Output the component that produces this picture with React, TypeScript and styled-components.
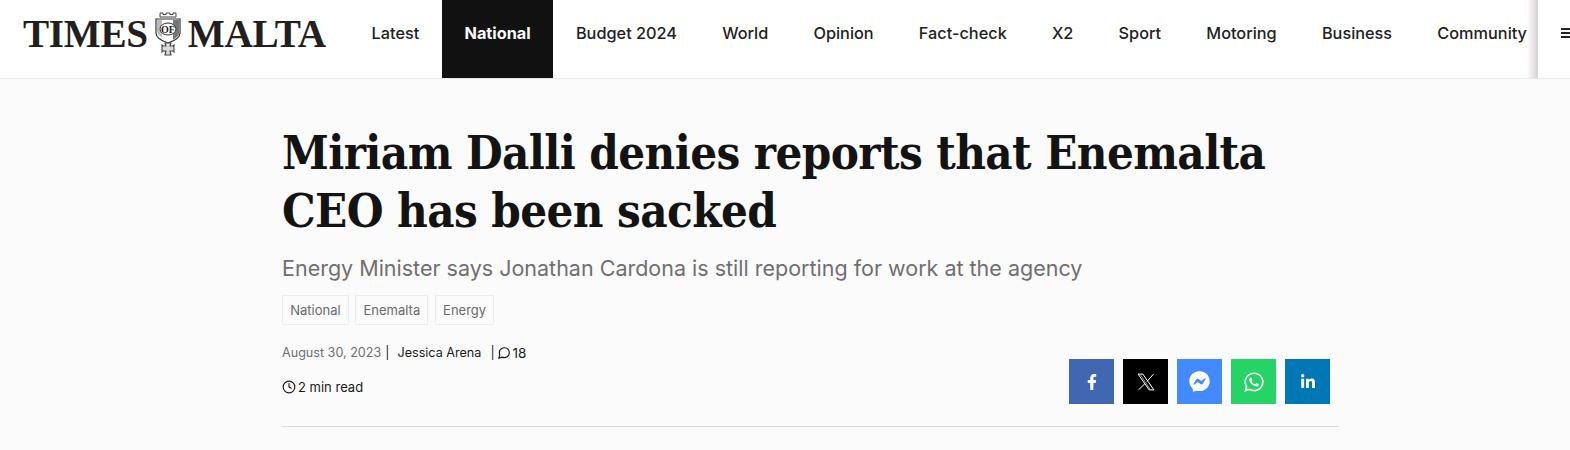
import React from 'react';
import styled, { createGlobalStyle } from 'styled-components';
import { FaFacebookF, FaFacebookMessenger, FaWhatsapp, FaLinkedinIn } from 'react-icons/fa';
import { FiClock, FiMessageCircle } from 'react-icons/fi';

const GlobalStyle = createGlobalStyle`
  html, body {
    margin: 0;
    padding: 0;
    background: #fbfbfb;
    font-family: 'Inter', 'Liberation Sans', sans-serif;
    overflow: hidden;
  }
`;

const Page = styled.div`
  width: 1570px;
  height: 450px;
  overflow: hidden;
`;

const TopBar = styled.header`
  display: flex;
  height: 78px;
  background: #fff;
  border-bottom: 1px solid #e8e8e8;
  overflow: hidden;
`;

const LogoLink = styled.a`
  flex: none;
  display: flex;
  align-items: center;
  width: 349px;
  padding: 0 0 10px 23px;
  box-sizing: border-box;
  font-family: 'Liberation Serif', serif;
  font-weight: 700;
  font-size: 39.2px;
  color: #231f20;
  gap: 5px;
`;

const LogoWord = styled.span`
  display: inline-block;
  line-height: 1;
  letter-spacing: -0.3px;
`;

const Nav = styled.nav`
  flex: 1;
  display: flex;
  min-width: 0;
  overflow: hidden;
`;

const NavItem = styled.a<{ $active?: boolean }>`
  flex: none;
  display: flex;
  align-items: center;
  padding: 0 22.6px 12px;
  font-size: 16.3px;
  font-weight: ${(p) => (p.$active ? 700 : 500)};
  color: ${(p) => (p.$active ? '#fff' : '#222')};
  background: ${(p) => (p.$active ? '#111' : 'transparent')};
`;

const MenuPanel = styled.div`
  flex: none;
  width: 32px;
  position: relative;
  background: #fff;
  display: flex;
  align-items: center;
  padding: 0 0 12px 23px;
  box-sizing: border-box;

  &::before {
    content: '';
    position: absolute;
    left: -11px;
    top: 0;
    bottom: 0;
    width: 11px;
    background: linear-gradient(to right, rgba(214, 207, 208, 0), #d6cfd0);
  }
`;

const Burger = styled.div`
  flex: none;
  width: 12px;
  height: 10px;
  border-top: 2px solid #222;
  border-bottom: 2px solid #222;
  box-sizing: border-box;
  position: relative;

  &::after {
    content: '';
    position: absolute;
    left: 0;
    right: 0;
    top: 2px;
    height: 2px;
    background: #222;
  }
`;

const Article = styled.main`
  width: 1057px;
  margin-left: 282px;
  padding-top: 45px;
`;

const Title = styled.h1`
  margin: 0;
  font-family: 'DejaVu Serif', 'Liberation Serif', serif;
  font-stretch: condensed;
  font-weight: 700;
  font-size: 47px;
  line-height: 58px;
  letter-spacing: -0.6px;
  color: #131313;
`;

const Subtitle = styled.h2`
  margin: 11px 0 0;
  font-family: 'Inter', 'Liberation Sans', sans-serif;
  font-weight: 400;
  font-size: 21.5px;
  line-height: 34px;
  color: #6f6f6f;
`;

const Tags = styled.div`
  display: flex;
  gap: 6.5px;
  margin-top: 10px;
`;

const Tag = styled.a`
  display: flex;
  align-items: center;
  height: 30px;
  padding: 0 7.2px;
  box-sizing: border-box;
  border: 1px solid #ececec;
  font-size: 13px;
  color: #6a6a6a;
`;

const MetaRow = styled.div`
  display: flex;
  justify-content: space-between;
  align-items: flex-start;
  border-bottom: 1px solid #d9d9d9;
  height: 101px;
`;

const MetaLeft = styled.div`
  display: flex;
  flex-direction: column;
  padding-top: 20px;
  gap: 18px;
  font-size: 12.6px;
  line-height: 16px;
  color: #1a1a1a;
`;

const MetaLine = styled.div`
  display: flex;
  align-items: center;
`;

const DateText = styled.span`
  color: #707070;
`;

const Sep = styled.span<{ $before: number; $after: number }>`
  margin: 0 ${(p) => p.$after}px 0 ${(p) => p.$before}px;
`;

const Count = styled.span`
  font-size: 13.5px;
`;

const ReadTime = styled.span`
  font-size: 13px;
`;

const IconWrap = styled.span`
  display: inline-flex;
  margin-right: 2px;
  font-size: 14px;
`;

const Share = styled.div`
  display: flex;
  gap: 9px;
  margin: 34px 9px 0 0;
`;

const ShareBtn = styled.a<{ $bg: string; $size: number }>`
  display: flex;
  align-items: center;
  justify-content: center;
  width: 45px;
  height: 45px;
  background: ${(p) => p.$bg};
  color: #fff;
  font-size: ${(p) => p.$size}px;
`;

const navItems = [
  'Latest',
  'National',
  'Budget 2024',
  'World',
  'Opinion',
  'Fact-check',
  'X2',
  'Sport',
  'Motoring',
  'Business',
  'Community',
];

const Crest = () => (
  <svg width="30" height="46" viewBox="0 0 30 46" style={{ flex: 'none' }}>
    <path d="M7 6V2h3v1.500h3V2h4v1.500h3V2h3v4z" fill="#fff" stroke="#444" strokeWidth="1" />
    <path d="M3 8h24v14c0 5-6 8-12 10-6-2-12-5-12-10z" fill="#fff" stroke="#333" strokeWidth="1.2" />
    <path d="M20 9h6v13c0 3-3 5-6 6.500z" fill="#777" />
    <path d="M4 9h5v17c-3-1-5-3-5-6z" fill="#bbb" />
    <ellipse cx="15" cy="18" rx="8" ry="6" fill="#fff" stroke="#333" strokeWidth="1" />
    <text x="15" y="21.500" textAnchor="middle" fontFamily="Liberation Serif, serif" fontWeight="700" fontSize="10" fill="#222">
      OF
    </text>
    <path
      d="M12 32h6l-1 3h3l1-1v7l-1-1h-3l1 4h-6l1-4h-3l-1 1v-7l1 1h3z"
      fill="#ddd"
      stroke="#444"
      strokeWidth="1.100"
    />
  </svg>
);

const XLogo = () => (
  <svg width="20" height="20" viewBox="0 0 24 24" fill="none" stroke="#fff" strokeWidth="1.200">
    <path d="M2.500 2.500h5.700l13.300 19h-5.700z" />
    <path d="M5.500 3.500l11.200 17" strokeWidth="0.700" />
    <path d="M21 2.500l-7.800 8.800M10.800 13.800L3 21.500" />
  </svg>
);

const App = () => (
  <Page>
    <GlobalStyle />
    <TopBar>
      <LogoLink>
        <LogoWord>TIMES</LogoWord>
        <Crest />
        <LogoWord>MALTA</LogoWord>
      </LogoLink>
      <Nav>
        {navItems.map((item) => (
          <NavItem key={item} $active={item === 'National'}>
            {item}
          </NavItem>
        ))}
      </Nav>
      <MenuPanel>
        <Burger />
      </MenuPanel>
    </TopBar>
    <Article>
      <Title>
        Miriam Dalli denies reports that Enemalta
        <br />
        CEO has been sacked
      </Title>
      <Subtitle>Energy Minister says Jonathan Cardona is still reporting for work at the agency</Subtitle>
      <Tags>
        <Tag>National</Tag>
        <Tag>Enemalta</Tag>
        <Tag>Energy</Tag>
      </Tags>
      <MetaRow>
        <MetaLeft>
          <MetaLine>
            <DateText>August 30, 2023</DateText>
            <Sep $before={4} $after={8}>|</Sep>
            <span>Jessica Arena</span>
            <Sep $before={9} $after={2}>|</Sep>
            <IconWrap>
              <FiMessageCircle />
            </IconWrap>
            <Count>18</Count>
          </MetaLine>
          <MetaLine>
            <IconWrap>
              <FiClock />
            </IconWrap>
            <ReadTime>2 min read</ReadTime>
          </MetaLine>
        </MetaLeft>
        <Share>
          <ShareBtn $bg="#4267b2" $size={16}>
            <FaFacebookF />
          </ShareBtn>
          <ShareBtn $bg="#000" $size={17}>
            <XLogo />
          </ShareBtn>
          <ShareBtn $bg="#448aff" $size={21}>
            <FaFacebookMessenger />
          </ShareBtn>
          <ShareBtn $bg="#25d366" $size={22}>
            <FaWhatsapp />
          </ShareBtn>
          <ShareBtn $bg="#0077b5" $size={16}>
            <FaLinkedinIn />
          </ShareBtn>
        </Share>
      </MetaRow>
    </Article>
  </Page>
);

export default App;
